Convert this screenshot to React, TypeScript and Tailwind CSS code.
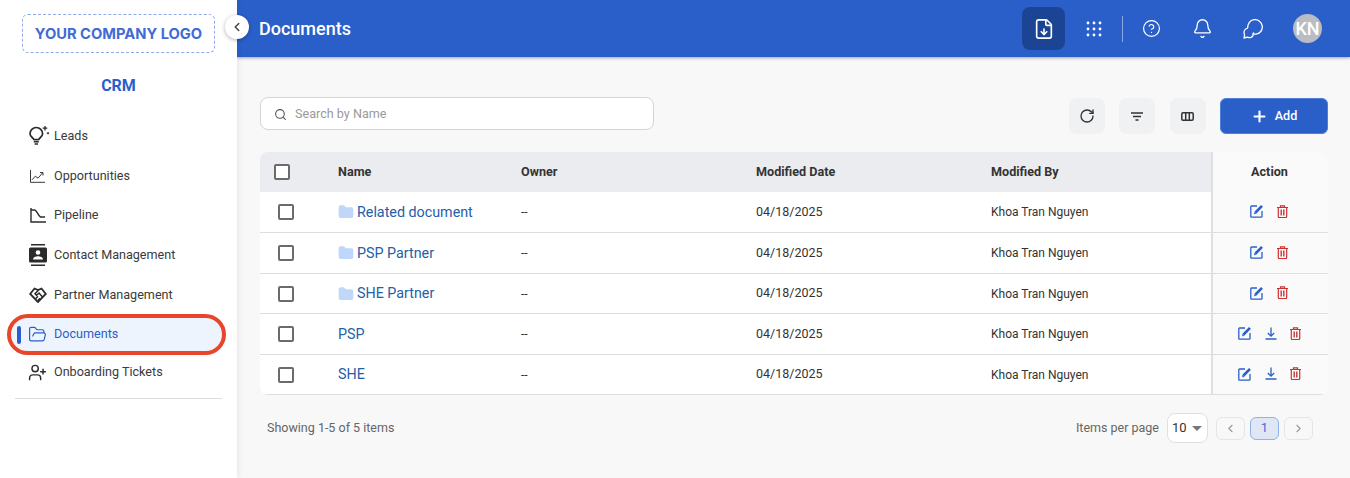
import { ChevronLeft, ChevronRight, CircleHelp, Bell, FileDown, Plus, RotateCw, Search, FolderOpen, UserPlus, Folder } from 'lucide-react';
import type { ReactNode } from 'react';

const font = { fontFamily: 'Roboto, sans-serif' };

function LeadsIcon() {
  return (
    <svg width="21" height="20" viewBox="0 0 21 20" fill="none" stroke="#2b2b2b" strokeWidth="1.700" className="ml-[3px]">
      <path d="M4.800 13.500C4.500 12 1 10.800 1 7.800a6.300 6.300 0 0 1 12.600 0c0 3-3.500 4.200-3.800 5.700z" />
      <path d="M4.800 15.700h5M5.600 18h3.400" />
      <path d="M16 0v4.500M13.700 2.200h4.600" strokeWidth="1.300" />
      <path d="M19 6v2.400M17.800 7.200h2.400" strokeWidth="1" />
    </svg>
  );
}

function OpportunitiesIcon() {
  return (
    <svg width="15" height="13" viewBox="0 0 15 13" fill="none" stroke="#3a3a3a" strokeWidth="1">
      <path d="M.5 0v12.300H15" />
      <path d="M2 9.800l3.300-3.600 2.700 2 4.500-5.200" />
      <path d="M10 2.500h3v3" />
    </svg>
  );
}

function PipelineIcon() {
  return (
    <svg width="16" height="15" viewBox="0 0 16 15" fill="none" stroke="#2b2b2b" strokeWidth="1.400">
      <path d="M1 0v14h15" />
      <path d="M1 2h3.500c2.500 0 3.500 6 6 7H15" />
    </svg>
  );
}

function ContactIcon() {
  return (
    <svg width="18" height="22" viewBox="0 0 18 22">
      <path fill="#2b2b2b" d="M2 0h14v1.500H2zM2 20.500h14V22H2zM1.500 3.500h15A1.500 1.500 0 0 1 18 5v12a1.500 1.500 0 0 1-1.500 1.500h-15A1.500 1.500 0 0 1 0 17V5a1.500 1.500 0 0 1 1.500-1.500z" />
      <circle cx="9" cy="8.500" r="2.300" fill="#fff" />
      <path fill="#fff" d="M4 15.500c0-2.200 2.500-3.300 5-3.300s5 1.100 5 3.300z" />
    </svg>
  );
}

function HandshakeIcon() {
  return (
    <svg width="18" height="16" viewBox="0 0 18 16" fill="none" stroke="#2b2b2b" strokeWidth="1.800">
      <path d="M9 15L1.200 7 5.500 1.500 9 3l3.500-1.500L16.800 7z" />
      <path d="M9.500 3L6 6.800l1.500 1.400L10 6l3.500 4M6.800 11.500L9 9.300M8.800 13.500l2.200-2.200" strokeWidth="1.500" />
    </svg>
  );
}

function GridDots() {
  return (
    <svg width="16" height="16" viewBox="0 0 16 16" fill="#fff">
      {[2, 8, 14].flatMap((y) =>
        [2, 8, 14].map((x) => <circle key={`${x}-${y}`} cx={x} cy={y} r="1.400" />),
      )}
    </svg>
  );
}

function ChatIcon() {
  return (
    <svg width="20" height="20" viewBox="0 0 20 20" fill="none" stroke="#fff" strokeWidth="1.300" strokeLinejoin="round">
      <path d="M4.800 9a7.300 7.300 0 1 1 8 6.200h-3l1-1.700" />
      <path d="M4.800 9C2.500 9.800 1 11.500 1 13.500c0 .8.200 1.500.6 2.200L1 19l3.200-.9c2.600 1 5.400.4 6.300-2.600" />
    </svg>
  );
}

function FilterIcon() {
  return (
    <svg width="12" height="9" viewBox="0 0 12 9" fill="none" stroke="#333" strokeWidth="1.300">
      <path d="M0 1h12M2 4.500h8M4.500 8h3" />
    </svg>
  );
}

function ColumnsIcon() {
  return (
    <svg width="13" height="9" viewBox="0 0 13 9" fill="none" stroke="#333" strokeWidth="1.500">
      <rect x=".8" y=".8" width="11.400" height="7.400" rx="1.200" />
      <path d="M4.700 1v7M8.300 1v7" />
    </svg>
  );
}

function EditIcon() {
  return (
    <svg width="14" height="14" viewBox="0 0 14 14" fill="none" stroke="#2a5fc9">
      <path d="M7 2H1.500a.7.700 0 0 0-.7.700v9.800a.7.700 0 0 0 .7.700h9.800a.7.700 0 0 0 .7-.7V7" strokeWidth="1.300" />
      <path d="M5.500 8.500L12 1.800" strokeWidth="2.600" />
      <path d="M4.300 10l.5-2 1.400 1.400z" fill="#2a5fc9" strokeWidth=".5" />
    </svg>
  );
}

function DownloadIcon() {
  return (
    <svg width="12" height="13" viewBox="0 0 12 13" fill="none" stroke="#2a5fc9" strokeWidth="1.300">
      <path d="M6 .5v8.500M2.800 6L6 9.200 9.200 6" />
      <path d="M.5 12h11" strokeWidth="1.500" />
    </svg>
  );
}

function TrashIcon() {
  return (
    <svg width="11" height="13" viewBox="0 0 11 13" fill="none" stroke="#cf2f2f" strokeWidth="1.200">
      <path d="M0 2.500h11M3.500 2.500V.8h4v1.700" />
      <path d="M1.300 2.500v9a1 1 0 0 0 1 1h6.400a1 1 0 0 0 1-1v-9" />
      <path d="M4.200 4.500v6M6.800 4.500v6" strokeWidth="1.400" />
    </svg>
  );
}

function ToolButton({ children }: { children: ReactNode }) {
  return (
    <button className="flex h-9 w-9 items-center justify-center rounded-lg bg-[#f0f1f3]">{children}</button>
  );
}

const navItems: { label: string; icon: ReactNode; h: string; active?: boolean }[] = [
  { label: 'Leads', icon: <LeadsIcon />, h: 'h-10' },
  { label: 'Opportunities', icon: <OpportunitiesIcon />, h: 'h-10' },
  { label: 'Pipeline', icon: <PipelineIcon />, h: 'h-[39px]' },
  { label: 'Contact Management', icon: <ContactIcon />, h: 'h-10' },
  { label: 'Partner Management', icon: <HandshakeIcon />, h: 'h-10' },
  { label: 'Documents', icon: <FolderOpen size={19} strokeWidth={1.5} className="text-[#2a5fc9]" />, h: 'h-[39px]', active: true },
  { label: 'Onboarding Tickets', icon: <UserPlus size={19} strokeWidth={1.800} className="text-[#2b2b2b]" />, h: 'h-[36px]' },
];

const rows = [
  { name: 'Related document', folder: true, h: 'h-[41px]' },
  { name: 'PSP Partner', folder: true, h: 'h-[41px]' },
  { name: 'SHE Partner', folder: true, h: 'h-[40px]' },
  { name: 'PSP', folder: false, h: 'h-[41px]' },
  { name: 'SHE', folder: false, h: 'h-[40px]' },
];

const gridCols = 'grid grid-cols-[78px_183px_235px_235px_220px_117px] items-center';

function Sidebar() {
  return (
    <aside className="relative z-10 flex h-[478px] w-[237px] shrink-0 flex-col bg-white shadow-[1px_0_6px_rgba(0,0,0,0.08)]">
      <div className="ml-[22px] mt-[14px] flex h-[39px] w-[193px] items-center justify-center rounded-md border border-dashed border-[#8ea8ec] pt-px font-['Inter'] text-[14.7px] font-bold text-[#3f6bd6]">
        YOUR COMPANY LOGO
      </div>
      <div className="mt-[21px] text-center text-base font-bold text-[#2a5fc9]">CRM</div>
      <nav className="mt-[18px] flex flex-col">
        {navItems.map((item) => (
          <div key={item.label} className={`flex items-center ${item.h}`}>
            <div className={`ml-[17px] h-[18px] w-1 rounded-sm ${item.active ? 'bg-[#2a5fc9]' : ''}`} />
            <div className="flex w-[33px] items-center justify-center">{item.icon}</div>
            <span className={`text-[12.6px] ${item.active ? 'text-[#2a5fc9]' : 'text-[#3a3a3a]'}`}>{item.label}</span>
          </div>
        ))}
      </nav>
      <div className="mx-[15px] mt-[8px] border-t border-[#dcdcdc]" />
      {/* highlight ring drawn over the active nav row */}
      <div className="absolute left-[7px] top-[314px] -z-10 h-[41px] w-[219px] rounded-full border-[4px] border-[#e8452a] bg-[#edf4fd]" />
      <button className="absolute left-[225px] top-[15px] flex h-6 w-6 items-center justify-center rounded-full bg-white shadow-[0_1px_4px_rgba(0,0,0,0.3)]">
        <ChevronLeft size={14} strokeWidth={2.500} className="text-[#444]" />
      </button>
    </aside>
  );
}

function Header() {
  return (
    <header className="flex h-[57px] items-center bg-[#2a5fc9] pl-[22px] pr-[28px] shadow-[0_1px_3px_rgba(0,0,0,0.35)]">
      <h1 className="text-lg font-medium text-white">Documents</h1>
      <div className="ml-auto flex items-center">
        <div className="flex h-[43px] w-[43px] items-center justify-center rounded-lg bg-[#1b4594]">
          <FileDown size={22} strokeWidth={1.800} className="text-white" />
        </div>
        <div className="ml-[21px]"><GridDots /></div>
        <div className="ml-[20px] h-[26px] w-px bg-[#8ba9e4]" />
        <CircleHelp size={19} strokeWidth={1.500} className="ml-[19px] text-white" />
        <Bell size={21} strokeWidth={1.500} className="ml-[31px] text-white" />
        <div className="ml-[30px]"><ChatIcon /></div>
        <div className="ml-[30px] flex h-[29px] w-[29px] items-center justify-center rounded-full bg-[#b9bcc2] text-[18px] font-medium text-white">KN</div>
      </div>
    </header>
  );
}

function Checkbox() {
  return <div className="h-4 w-4 rounded-[2px] border-2 border-[#6b6b6b] bg-white" />;
}

function Table() {
  return (
    <div className="mt-[18px] overflow-hidden rounded-lg text-xs text-[#333]">
      <div className={`${gridCols} h-10 bg-[#ebecf0] text-[12.6px] font-bold`}>
        <div className="pl-[14px]"><Checkbox /></div>
        <div>Name</div>
        <div>Owner</div>
        <div>Modified Date</div>
        <div>Modified By</div>
        <div className="flex h-full items-center justify-center border-l-2 border-[#e0e0e0] bg-[#fafafa] pr-[2px]">Action</div>
      </div>
      {rows.map((row) => (
        <div key={row.name} className={`${gridCols} ${row.h} border-b border-[#dedede] bg-white`}>
          <div className="pl-[18px]"><Checkbox /></div>
          <div className="flex items-center gap-[3px] pt-px text-[14.300px] text-[#2460a7]">
            {row.folder && <Folder size={16} fill="#bfd7f9" stroke="#bfd7f9" />}
            {row.name}
          </div>
          <div>--</div>
          <div className="text-[12.5px]">04/18/2025</div>
          <div>Khoa Tran Nguyen</div>
          <div className="flex h-full items-center justify-center gap-[13px] border-l-2 border-[#e0e0e0] bg-[#fafafa] pb-[2px] pr-[3px]">
            <EditIcon />
            {!row.folder && <DownloadIcon />}
            <TrashIcon />
          </div>
        </div>
      ))}
    </div>
  );
}

function Pager() {
  return (
    <div className="mt-[18px] flex items-center text-[12.5px] text-[#666]">
      <span className="ml-[7px]">Showing 1-5 of 5 items</span>
      <div className="ml-auto flex items-center pr-[15px]">
        <span>Items per page</span>
        <div className="ml-[8px] flex h-[30px] w-[41px] items-center justify-between rounded-lg border border-[#e0e0e0] bg-white pl-[4px] pr-[5px] text-[13px] text-[#333]">
          10
          <span className="h-0 w-0 border-x-[5px] border-t-[5px] border-x-transparent border-t-[#777]" />
        </div>
        <div className="ml-[8px] flex h-[23px] w-[29px] items-center justify-center rounded-md border border-[#e5e5e5]">
          <ChevronLeft size={13} className="text-[#999]" />
        </div>
        <div className="ml-[5px] flex h-[23px] w-[29px] items-center justify-center rounded-md border border-[#8fb2ea] bg-[#dfe7f5] text-[13px] text-[#3f6bd6]">1</div>
        <div className="ml-[5px] flex h-[23px] w-[29px] items-center justify-center rounded-md border border-[#e5e5e5]">
          <ChevronRight size={13} className="text-[#999]" />
        </div>
      </div>
    </div>
  );
}

export default function App() {
  return (
    <div className="flex h-[478px] w-[1350px] overflow-hidden bg-[#f8f8f8]" style={font}>
      <Sidebar />
      <main className="flex-1">
        <Header />
        <div className="pl-[23px] pr-[22px] pt-[41px]">
          <div className="flex items-start">
            <div className="-mt-px flex h-[33px] w-[394px] items-center gap-[8px] rounded-lg border border-[#d5d5d5] bg-white pl-[13px] pt-px text-[12.6px] text-[#9a9a9a]">
              <Search size={13} strokeWidth={2} className="text-[#555]" />
              Search by Name
            </div>
            <div className="ml-auto flex items-center gap-[14.5px]">
              <ToolButton><RotateCw size={16} strokeWidth={2} className="text-[#333]" /></ToolButton>
              <ToolButton><FilterIcon /></ToolButton>
              <ToolButton><ColumnsIcon /></ToolButton>
              <button className="flex h-9 w-[108px] items-center justify-center gap-[7px] rounded-md border border-[#4f7fd9] bg-[#2a5fc9] text-[12.6px] font-medium text-white">
                <Plus size={17} strokeWidth={3} />
                Add
              </button>
            </div>
          </div>
          <Table />
          <Pager />
        </div>
      </main>
    </div>
  );
}
